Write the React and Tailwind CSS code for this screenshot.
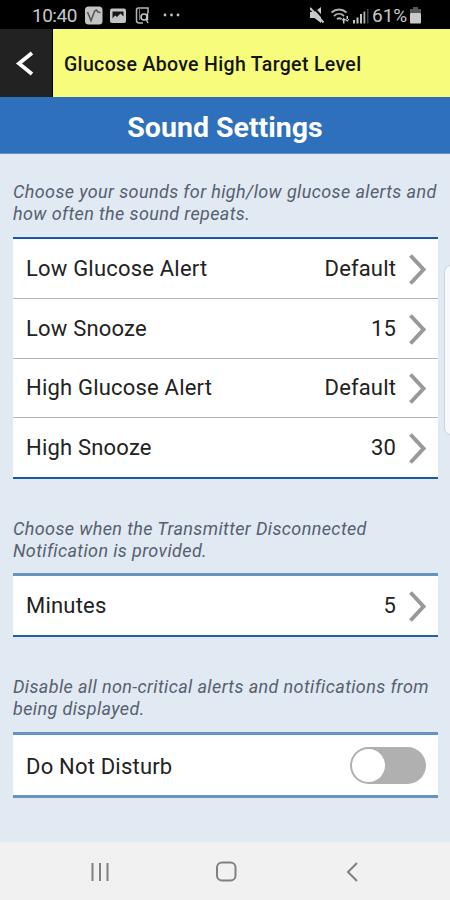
function StatusBar() {
  return (
    <header className="flex h-[29px] shrink-0 items-center bg-black pl-8 pr-[29px] text-[#c9c9c9]">
      <span className="w-[53px] pt-[3px] text-[19px] leading-6 tracking-[-0.5px] whitespace-nowrap">10:40</span>
      <svg className="mt-[1px]" width="97" height="20" viewBox="0 0 97 20" fill="none">
        <rect x="0" y="1.5" width="17.5" height="18" rx="3.5" fill="#c4c4c4" />
        <path d="M2.500 7l3.500 8.500L9.700 6l1.800-1 1.500 2 2.500.5" stroke="#555" strokeWidth="1.600" />
        <rect x="25" y="3.500" width="16" height="14.500" rx="2" fill="#c4c4c4" />
        <path d="M27.500 13.500v-7h11v5l-3-3-3.500 3.500-2-1.500z" fill="#171717" />
        <path d="M58 18h-3.500c-2 0-3-1-3-2.500V5c0-1.500.8-2 2-2h9.500v5" stroke="#b5b5b5" strokeWidth="1.500" />
        <path d="M54.500 3v12" stroke="#777" strokeWidth="1" />
        <circle cx="59" cy="12" r="3" stroke="#c4c4c4" strokeWidth="1.600" />
        <path d="M61 14l2 4M62.500 8v7" stroke="#c4c4c4" strokeWidth="1.500" />
        <g fill="#c4c4c4"><circle cx="80" cy="10" r="1.400" /><circle cx="86.500" cy="10" r="1.400" /><circle cx="93" cy="10" r="1.400" /></g>
      </svg>
      <svg className="mt-[2px] ml-auto" width="64" height="20" viewBox="0 0 64 20" fill="none">
        <path d="M0 6h4.500l6.500-5v16l-6.500-5H0z" fill="#c9c9c9" />
        <path d="M2 0l14 15" stroke="#000" strokeWidth="2" />
        <path d="M0 2l13.500 14.500" stroke="#c9c9c9" strokeWidth="2" />
        <path d="M21.500 6.500c4.500-4 10.500-4 15 0M24 10c3-2.800 7-2.800 10 0M27 13.200c1.500-1.300 3-1.300 4.500 0" stroke="#b0b0b0" strokeWidth="1.800" />
        <path d="M31.500 14.500l2.200-3 2.200 3zM35 13l2.200 3 2.200-3zM33 14h1.500v3.500H33zM36.500 10H38v4h-1.500z" fill="#c9c9c9" />
        <path d="M43 14h2v3.500h-2zM46.500 11.500h2v6h-2zM50 8h2v9.500h-2z" fill="#c4c4c4" />
        <path d="M53.500 5.500h1.800v12h-1.800z" fill="#b0b0b0" />
        <path d="M57 3h1.500v14.500H57z" fill="#444" />
      </svg>
      <span className="ml-[-2px] w-[38px] pt-[3px] text-[19px] leading-6 whitespace-nowrap">61%</span>
      <svg className="mt-[2px]" width="11" height="17" viewBox="0 0 11 17">
        <path d="M3 0h5v2h3v4H0V2h3z" fill="#555" />
        <rect y="6" width="11" height="10.500" rx="1" fill="#c9c9c9" />
      </svg>
    </header>
  );
}

function Note({ children }) {
  return (
    <p className="pt-[27px] text-[18px] leading-[21.5px] tracking-[0.38px] whitespace-nowrap text-[#56606e] italic">
      {children}
    </p>
  );
}

function Row({ label, value }) {
  return (
    <div className="flex flex-1 items-center pr-[12px] pl-[13px]">
      <span className="pt-[1px] tracking-[0.2px]">{label}</span>
      <span className="ml-auto pt-[1px] tracking-[0.15px]">{value}</span>
      <svg className="mt-[3px] ml-[12px]" width="18" height="32" viewBox="0 0 18 32" fill="none">
        <path d="M2.500 1.500L15.500 15.500L2.500 29.500" stroke="#999" strokeWidth="3.900" />
      </svg>
    </div>
  );
}

export default function App() {
  return (
    <div className="relative flex h-[900px] w-[450px] flex-col overflow-hidden bg-[#e1e9f3] font-['Roboto',sans-serif]">
      <StatusBar />
      <div className="flex h-[68px] shrink-0 bg-[#f8fc7d]">
        <button aria-label="Back" className="flex w-[53px] items-center justify-center border-r border-black bg-[#222]">
          <svg className="mr-[2px]" width="20" height="28" viewBox="0 0 20 28" fill="none">
            <path d="M17 4L4 14.500l13 10.500" stroke="#fff" strokeWidth="3.800" />
          </svg>
        </button>
        <div className="flex items-center pt-[3px] pl-[11px] text-[19.5px] font-medium tracking-[0.34px] whitespace-nowrap text-[#15150c]">
          Glucose Above High Target Level
        </div>
      </div>
      <h1 className="flex h-[57px] shrink-0 items-center justify-center border-b border-[#5d94cc] bg-[#2e70bb] pt-[6px] text-[28.5px] font-bold text-white">
        <span>Sound Settings</span>
      </h1>
      <main className="flex flex-1 flex-col px-[13px] text-[22px] leading-[26px] text-[#222]">
        <section className="h-[325px]">
          <Note>Choose your sounds for high/low glucose alerts and<br />how often the sound repeats.</Note>
          <div className="mt-[13px] flex h-[242px] w-[425px] flex-col divide-y divide-[#b5b5b5] border-y-2 border-[#1a59a3] bg-white">
            <Row label="Low Glucose Alert" value="Default" />
            <Row label="Low Snooze" value="15" />
            <Row label="High Glucose Alert" value="Default" />
            <Row label="High Snooze" value="30" />
          </div>
        </section>
        <section className="h-[158px] pt-[12px]">
          <Note>Choose when the Transmitter Disconnected<br />Notification is provided.</Note>
          <div className="mt-[12px] flex h-[64px] w-[425px] border-t-3 border-b-2 border-t-[#6893bf] border-b-[#245f9e] bg-white">
            <Row label="Minutes" value="5" />
          </div>
        </section>
        <section className="pt-[12px]">
          <Note>Disable all non-critical alerts and notifications from<br />being displayed.</Note>
          <div className="mt-[13px] flex h-[66px] w-[425px] items-center justify-between border-y-3 border-[#6893bf] bg-white pr-[12px] pl-[13px]">
            <span className="pt-[3px] tracking-[0.2px]">Do Not Disturb</span>
            <button role="switch" aria-checked="false" aria-label="Do Not Disturb" className="flex h-[37px] w-[76px] items-center rounded-full bg-[#b0b0b0] pl-[2px]">
              <span className="size-[33px] rounded-full bg-white" />
            </button>
          </div>
        </section>
      </main>
      <nav className="flex h-[58px] shrink-0 items-center justify-between bg-[#f1f1f1] px-[89px] pt-[2px]">
        <svg width="22" height="22" viewBox="0 0 22 22" stroke="#808080" strokeWidth="2">
          <path d="M3.500 2v18M11 2v18M18.500 2v18" />
        </svg>
        <svg className="mr-[4px]" width="24" height="24" viewBox="0 0 24 24" fill="none">
          <rect x="3" y="2.500" width="18.500" height="18" rx="5" stroke="#808080" strokeWidth="2" />
        </svg>
        <svg width="16" height="22" viewBox="0 0 16 22" fill="none">
          <path d="M12 2L3 11l9 9" stroke="#808080" strokeWidth="2" />
        </svg>
      </nav>
      <div className="absolute top-[265px] left-[444px] h-[170px] w-3 rounded-l-[7px] border border-[#cbd2de] bg-[#f7f9fc]" />
    </div>
  );
}
